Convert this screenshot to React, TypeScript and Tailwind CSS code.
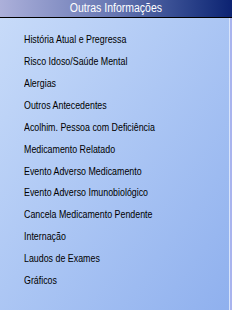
import React from 'react';

const items = [
  'História Atual e Pregressa',
  'Risco Idoso/Saúde Mental',
  'Alergias',
  'Outros Antecedentes',
  'Acolhim. Pessoa com Deficiência',
  'Medicamento Relatado',
  'Evento Adverso Medicamento',
  'Evento Adverso Imunobiológico',
  'Cancela Medicamento Pendente',
  'Internação',
  'Laudos de Exames',
  'Gráficos',
];

export default function App() {
  return (
    <div className="w-[232px] h-[310px] flex flex-col overflow-hidden font-['Liberation_Sans',sans-serif] bg-gradient-to-br from-[#c9dcf9] to-[#8fb0ee]">
      <div className="h-[18px] flex items-center justify-center border-b border-black bg-gradient-to-r from-[#acb0da] via-[#6676b2] to-[#0c2272] text-white text-[12.5px] leading-none">
        <span className="inline-block whitespace-nowrap scale-x-[0.84]">Outras Informações</span>
      </div>
      <div className="flex-1 flex border-r-2 border-r-[#a9b4ee]">
        <ul className="flex-1 flex flex-col pt-[11px] pl-[24px] border-r border-r-[#d8e4fb]">
          {items.map((item) => (
            <li key={item} className="h-[21.9px] flex items-center text-[11.5px] text-black leading-none">
              <span className="inline-block whitespace-nowrap origin-left scale-x-[0.77]">{item}</span>
            </li>
          ))}
        </ul>
      </div>
    </div>
  );
}
